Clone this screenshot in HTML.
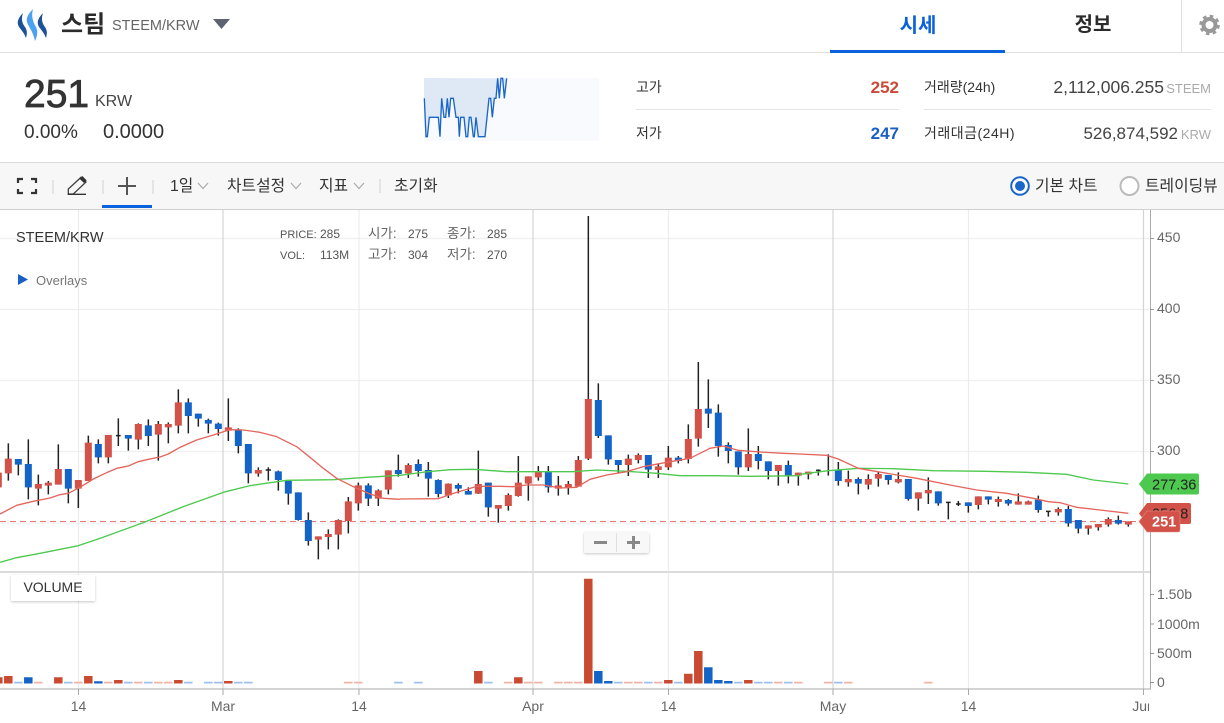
<!DOCTYPE html>
<html lang="ko"><head><meta charset="utf-8"><title>STEEM/KRW</title>
<style>
html,body{margin:0;padding:0;background:#fff;width:1224px;height:723px;overflow:hidden}
svg{display:block;fill:#333}
text{font-family:"Liberation Sans","Noto Sans CJK KR",sans-serif}
.ax{font-size:14px;fill:#666}
.in{font-size:12px;fill:#555}
.ko{font-size:13.5px;fill:#666}
.hg{fill:none;stroke-width:4;stroke-linejoin:round}
</style></head><body>
<svg width="1224" height="723" viewBox="0 0 1224 723" xmlns="http://www.w3.org/2000/svg">
<defs>
<clipPath id="cl"><rect x="0" y="690" width="1149" height="33"/></clipPath>
<filter id="sh" x="-10%" y="-20%" width="120%" height="150%"><feDropShadow dx="0" dy="1" stdDeviation="1.200" flood-color="#000" flood-opacity=".22"/></filter>
</defs>
<rect width="1224" height="723" fill="#fff"/>

<!-- header -->
<path d="M23 13C19 17 17 21 18 24.500C19 28.500 23.500 31 26 38C27.500 33 27 30 25 27C22 23 21 19 23 13Z" fill="#1d5299"/>
<path d="M33 9C28 14 26 18 27 22C28 26 33 31 35 41C37.500 36 38 31 36 27C33 22 31 16 33 9Z" fill="#4ba2f2"/>
<path d="M43 13C39 17 37 21 38 24.500C39 28.500 43.500 31 46 38C47.500 33 47 30 45 27C42 23 41 19 43 13Z" fill="#1d5299"/>
<text x="61" y="32.500" font-size="24" font-weight="700" fill="#2b2b2b">스팀</text>
<text x="112" y="30" font-size="14.500" fill="#666">STEEM/KRW</text>
<path d="M213 19H230L221.500 29Z" fill="#5f6370"/>
<text x="918" y="32" font-size="20" font-weight="700" text-anchor="middle" fill="#0a62dc">시세</text>
<text x="1093" y="31" font-size="20" font-weight="700" text-anchor="middle" fill="#2b2b2b">정보</text>
<rect x="1181" y="0" width="1" height="52" fill="#e2e2e2"/>
<circle cx="1209.500" cy="25" r="6" fill="none" stroke="#999" stroke-width="4"/>
<circle cx="1209.500" cy="25" r="8.800" fill="none" stroke="#999" stroke-width="3" stroke-dasharray="3.500 3.410"/>
<rect x="0" y="52" width="1224" height="1" fill="#e0e0e0"/>
<rect x="830" y="50" width="175" height="3" fill="#0a62dc"/>

<!-- price summary -->
<text x="24" y="107" font-size="39" fill="#333" stroke="#333" stroke-width=".8">251</text>
<text x="95" y="106" font-size="16" fill="#444">KRW</text>
<text x="24" y="138" font-size="19" fill="#333">0.00%</text>
<text x="103" y="138" font-size="20" fill="#333">0.0000</text>

<!-- sparkline -->
<rect x="424" y="78" width="175" height="63" fill="#f8fafd"/>
<g transform="translate(410 70) scale(.33333)">
<path d="M42 24V85L48 200H52L58 142H85L90 200L95 85L102 142H107L112 85L117 142L122 85H130L138 142H145L148 200L152 142H162L168 200H173L178 142H183L190 200H193L198 142L205 200H225L237 85H242L247 142L253 85H258L263 25L268 85L273 25H278L283 85L290 25Z" fill="#dfe9f5"/>
<path d="M43 85L48 200H52L58 142H85L90 200L95 85L102 142H107L112 85L117 142L122 85H130L138 142H145L148 200L152 142H162L168 200H173L178 142H183L190 200H193L198 142L205 200H225L237 85H242L247 142L253 85H258L263 25L268 85L273 25H278L283 85L290 25" fill="none" stroke="#1a66c8" stroke-width="4"/>
</g>

<!-- stats -->
<text x="636" y="92" font-size="14">고가</text>
<text x="899" y="93" font-size="17" font-weight="700" text-anchor="end" fill="#c84a37">252</text>
<rect x="636" y="109" width="263" height="1" fill="#e5e5e5"/>
<text x="636" y="138" font-size="14">저가</text>
<text x="899" y="139" font-size="17" font-weight="700" text-anchor="end" fill="#1a5fc4">247</text>
<text x="924" y="92" font-size="14">거래량(24h)</text>
<text x="1164" y="93" font-size="17.500" text-anchor="end" fill="#444">2,112,006.255</text>
<text x="1211" y="93" font-size="13" text-anchor="end" fill="#aaa">STEEM</text>
<rect x="924" y="109" width="287" height="1" fill="#e5e5e5"/>
<text x="924" y="138" font-size="14" letter-spacing=".5">거래대금(24H)</text>
<text x="1178" y="139" font-size="17" text-anchor="end" fill="#444">526,874,592</text>
<text x="1211" y="139" font-size="13" text-anchor="end" fill="#aaa">KRW</text>

<!-- toolbar -->
<rect x="0" y="162" width="1224" height="48" fill="#f7f7f7"/>
<rect x="0" y="162" width="1224" height="1" fill="#ddd"/>
<rect x="0" y="209" width="1224" height="1" fill="#d0d0d0"/>
<path d="M18 183V179H23M31 179H36V183M36 189V193H31M23 193H18V189" fill="none" stroke="#333" stroke-width="2.200"/>
<path d="M53 180V194M103 180V194M153 180V194M380 179V193" stroke="#ddd" stroke-width="1.500" fill="none"/>
<g transform="translate(0 165) scale(.33333)">
<path d="M205 72L243 37L258 51L220 87H205Z" fill="none" stroke="#444" stroke-width="4"/>
<path d="M238 41L247 33L260 46L252 54Z" fill="#333"/>
<path d="M203 88H258" stroke="#333" stroke-width="4"/>
</g>
<path d="M118 186H136M127 177V195" stroke="#555" stroke-width="2" fill="none"/>
<rect x="102" y="205" width="50" height="3" fill="#0a62dc"/>
<text x="170" y="191" font-size="15.800">1일</text>
<path d="M198 183L203 188.500L208 183M291 183L296 188.500L301 183M354 183L359 188.500L364 183" fill="none" stroke="#aaa" stroke-width="1.200"/>
<text x="227" y="191" font-size="15.800">차트설정</text>
<text x="319" y="191" font-size="15.800">지표</text>
<text x="394" y="191" font-size="15.800">초기화</text>
<circle cx="1020" cy="186" r="8.800" fill="#fff" stroke="#1a66c8" stroke-width="2"/>
<circle cx="1020" cy="186" r="5" fill="#1a66c8"/>
<text x="1035" y="191" font-size="15.800">기본 차트</text>
<circle cx="1129.500" cy="186" r="9" fill="#fff" stroke="#bbb" stroke-width="2"/>
<text x="1145" y="191" font-size="15.800">트레이딩뷰</text>

<!-- grid -->
<path d="M0 238.500H1150M0 309.500H1150M0 380.500H1150M0 451.500H1150M0 523H1150" stroke="#efefef" stroke-width="1.300" fill="none"/>
<path d="M78.500 210V689M359 210V689M668.500 210V689M968.500 210V689" stroke="#ececec" stroke-width="1.200" fill="none"/>
<path d="M223 210V689M533 210V689M833 210V689M1143.500 210V689" stroke="#d4d4d4" stroke-width="1.200" fill="none"/>
<rect x="1150" y="210" width="1" height="479" fill="#aaa"/>
<path d="M1150 238.500H1154M1150 309.500H1154M1150 380.500H1154M1150 451.500H1154M1150 594.500H1154M1150 624H1154M1150 653.500H1154M1150 682.500H1154" stroke="#999"/>
<path d="M0 521.500H1143" stroke="#e07a72" stroke-width="1" stroke-dasharray="6 4"/>

<!-- candles 0-400 -->
<g transform="translate(0 370) scale(.33333)" fill="none">
<path stroke="#222" stroke-width="4.500" d="M25 220V332M55 267V316M85 208V388M115 314V406M145 333V373M175 223V344M205 297V400M235 330V414M265 197V333M295 208V280M325 195V280M355 145V228M348 197H362M385 195V242M415 160V238M445 148V228M475 153V272M505 157V220M535 58V190M565 85V190M595 131V170M625 146V190M655 158V197M685 85V213M715 175V250M745 222V340M775 292V320M805 292V332M797 300H813M835 302V362M865 330V404M895 367V452M925 427V527M955 499V568M985 478V538M1015 448V538M1045 381V490M1075 338V422M1105 340V408M1135 358V408M1165 301V373M1195 254V320"/>
<path stroke="#d2524a" stroke-width="21" d="M-5 308V352M25 266V310M115 342V356M145 338V347M175 297V344M235 330V356M265 218V333M325 195V262M415 162V209M475 162V194M505 162V172M535 97V167M685 172V182M775 300V311M955 499V509M985 492V501M1015 450V494M1045 394V453M1075 346V400M1135 361V386M1165 301V359"/>
<path stroke="#1464c8" stroke-width="21" d="M55 267V284M85 282V352M205 297V356M295 222V262M385 195V206M445 166V198M565 97V138M595 131V146M625 150V161M655 161V177M715 178V228M745 222V310M835 304V330M865 332V371M895 367V450M925 450V513M1105 346V386M1195 300V312"/>
</g>
<!-- candles 400-800 -->
<g transform="translate(400 370) scale(.33333)" fill="none">
<path stroke="#222" stroke-width="4.500" d="M25 280V324M55 268V320M85 276V380M115 328V382M145 340V384M175 340V370M205 352V374M235 242V372M265 338V440M295 405V458M325 370V422M355 258V380M385 319V392M415 288V332M445 288V368M475 318V377M505 333V374M535 258V350M565 -462V270M595 40V204M625 196V284M655 270V308M685 254V318M715 250V280M745 255V324M775 280V324M805 228V300M835 258V280M865 163V280M895 -24V230M925 28V174M955 103V260M985 217V280M1015 244V314M1045 175V303M1075 228V298M1105 274V328M1135 285V347M1165 272V340M1195 308V347"/>
<path stroke="#d2524a" stroke-width="21" d="M25 285V310M145 341V376M235 342V371M295 405V416M325 375V408M355 338V378M385 319V341M415 306V322M475 346V356M505 342V354M535 270V350M565 87V266M685 266V285M715 255V270M775 289V300M805 263V292M865 207V267M895 117V206M1045 252V292M1135 285V303M1195 308V317"/>
<path stroke="#1464c8" stroke-width="21" d="M55 282V303M85 300V326M115 330V372M175 345V356M205 363V374M265 338V412M445 306V352M595 90V198M625 196V268M655 270V285M745 255V299M835 263V273M925 116V131M955 128V228M985 225V243M1015 244V292M1075 252V273M1105 274V303M1165 285V316"/>
</g>
<!-- candles 800+ -->
<g transform="translate(800 430) scale(.33333)" fill="none">
<path stroke="#222" stroke-width="4.500" d="M25 125V148M55 118V137M48 121H62M85 73V137M115 96V167M145 122V170M175 142V193M205 133V178M235 125V170M265 135V164M295 127V160M325 147V212M355 187V242M385 142V222M415 184V227M445 215V268M438 217H452M475 213V228M468 222H482M505 217V248M535 199V238M565 199V223M595 200V230M625 207V227M655 190V224M685 212V224M715 197V248M745 242V260M738 244H752M775 232V257M805 228V290M835 270V310M865 286V314M895 282V302M925 262V290M955 257V284M985 274V290"/>
<path stroke="#d2524a" stroke-width="21" d="M25 125V133M145 147V157M205 147V164M235 132V146M295 147V157M355 187V206M385 180V190M535 199V225M595 207V216M655 214V224M685 214V224M775 237V247M865 286V296M895 282V292M925 267V284M985 274V284"/>
<path stroke="#1464c8" stroke-width="21" d="M115 120V153M175 147V161M265 135V150M325 147V207M415 184V220M505 217V228M565 199V209M625 210V221M715 209V240M805 237V280M835 270V296M955 270V281"/>
</g>

<!-- moving averages -->
<g transform="translate(0 370) scale(.33333)">
<polyline class="hg" stroke="#4dc94d" points="0,577 50,563 130,548 235,527 300,505 430,458 550,410 670,367 750,347 860,331 1000,329 1100,322 1200,316"/>
<polyline class="hg" stroke="#e4655c" points="0,432 50,406 100,394 150,384 180,374 205,370 240,352 280,327 320,308 350,295 385,288 415,275 445,268 480,261 505,252 540,232 590,210 640,195 690,179 730,180 780,187 830,200 890,230 930,262 970,295 1010,325 1060,350 1110,372 1150,385 1200,388"/>
</g>
<g transform="translate(400 370) scale(.33333)">
<polyline class="hg" stroke="#4dc94d" points="0,316 75,306 150,299 220,298 320,305 520,305 590,300 680,304 770,310 840,317 950,317 1050,319 1200,317"/>
<polyline class="hg" stroke="#e4655c" points="0,387 115,386 160,370 230,349 300,349 340,350 380,345 430,345 480,354 530,352 570,328 620,315 680,305 730,290 800,277 870,265 930,235 970,228 1015,241 1080,246 1150,250 1200,252"/>
</g>
<g transform="translate(800 430) scale(.33333)">
<polyline class="hg" stroke="#4dc94d" points="0,133 85,122 175,115 280,116 400,122 560,124 680,127 800,133 880,150 985,162"/>
<polyline class="hg" stroke="#e4655c" points="0,72 80,76 115,87 175,115 250,128 350,145 450,165 530,180 620,190 700,205 745,215 780,218 830,232 900,240 985,250"/>
</g>

<!-- zoom buttons -->
<rect x="584" y="532" width="65" height="21" rx="2" fill="#f8f8f8" filter="url(#sh)"/>
<rect x="616" y="533" width="1" height="19" fill="#e0e0e0"/>
<path d="M594 542.500H607M627 542.500H640M633.500 536V549" stroke="#888" stroke-width="3" fill="none"/>

<!-- price labels -->
<text class="ax" x="1157" y="242">450</text>
<text class="ax" x="1157" y="313">400</text>
<text class="ax" x="1157" y="384">350</text>
<text class="ax" x="1157" y="455">300</text>

<path d="M1139 484L1147 473.500H1197A2 2 0 0 1 1199 475.500V492.500A2 2 0 0 1 1197 494.500H1147Z" fill="#4cc94e"/>
<text x="1152" y="489.500" font-size="14.500" fill="#222">277.36</text>
<path d="M1139 513.500L1147 503H1189A2 2 0 0 1 1191 505V522A2 2 0 0 1 1189 524H1147Z" fill="#d2524a"/>
<text x="1152" y="518.500" font-size="14.500" fill="#222">256.8</text>
<path d="M1139 521.500L1147 511H1178A2 2 0 0 1 1180 513V530A2 2 0 0 1 1178 532H1147Z" fill="#d2524a" stroke="#e48a83" stroke-width=".6"/>
<text x="1152" y="526.500" font-size="14.500" font-weight="700" fill="#fff">251</text>

<!-- chart legend -->
<text x="16" y="242" font-size="14.500" fill="#333">STEEM/KRW</text>
<path d="M18 274L28 279.500L18 285Z" fill="#1a5fc4"/>
<text x="36" y="285" font-size="13" fill="#777">Overlays</text>
<text class="in" style="font-size:11px" x="280" y="238">PRICE:</text><text class="in" x="320" y="238">285</text>
<text class="in" style="font-size:11px" x="280" y="259">VOL:</text><text class="in" x="320" y="259">113M</text>
<text class="ko" x="368" y="238">시가:</text><text class="in" x="408" y="238">275</text>
<text class="ko" x="447" y="238">종가:</text><text class="in" x="487" y="238">285</text>
<text class="ko" x="368" y="259">고가:</text><text class="in" x="408" y="259">304</text>
<text class="ko" x="447" y="259">저가:</text><text class="in" x="487" y="259">270</text>

<!-- volume panel -->
<rect x="0" y="571" width="1150" height="2" fill="#dcdcdc"/>
<g fill="none" stroke-width="8.500">
<path stroke="#f0b3a8" d="M38.300 681.700V683.500M78.300 681.700V683.500M108.300 681.700V683.500M138.300 681.700V683.500M158.300 681.700V683.500M168.300 681.700V683.500M348.300 681.700V683.500M358.300 681.700V683.500M508.300 681.700V683.500M528.300 681.700V683.500M538.300 681.700V683.500M558.300 681.700V683.500M568.300 681.700V683.500M578.300 681.700V683.500M628.300 681.700V683.500M638.300 681.700V683.500M658.300 681.700V683.500M778.300 681.700V683.500M798.300 681.700V683.500M828.300 681.700V683.500M848.300 681.700V683.500M928.300 681.700V683.500"/>
<path stroke="#9cc0f0" d="M18.300 681.700V683.500M68.300 681.700V683.500M128.300 681.700V683.500M148.300 681.700V683.500M188.300 681.700V683.500M208.300 681.700V683.500M218.300 681.700V683.500M238.300 681.700V683.500M248.300 681.700V683.500M398.300 681.700V683.500M418.300 681.700V683.500M488.300 681.700V683.500M618.300 681.700V683.500M648.300 681.700V683.500M678.300 681.700V683.500M738.300 681.700V683.500M758.300 681.700V683.500M768.300 681.700V683.500M788.300 681.700V683.500M838.300 681.700V683.500"/>
<path stroke="#c94a30" d="M-1.700 677.300V683.500M8.300 676V683.500M58.300 677.300V683.500M88.300 676V683.500M118.300 680V683.500M178.300 680V683.500M228.300 681V683.500M478.300 671V683.500M518.300 677.300V683.500M588.300 578.700V683.500M668.300 680V683.500M688.300 673.700V683.500M698.300 651V683.500M748.300 680V683.500"/>
<path stroke="#1464c8" d="M28.300 677.300V683.500M98.300 681.200V683.500M598.300 671V683.500M608.300 681V683.500M708.300 667.300V683.500M718.300 680V683.500M728.300 681V683.500"/>
</g>
<rect x="11" y="575" width="84" height="26" fill="#fff" filter="url(#sh)"/>
<text x="53" y="592" font-size="14" text-anchor="middle" fill="#333">VOLUME</text>
<text class="ax" x="1157" y="599">1.50b</text>
<text class="ax" x="1157" y="629">1000m</text>
<text class="ax" x="1157" y="658">500m</text>
<text class="ax" x="1157" y="687">0</text>

<!-- time axis -->
<rect x="0" y="688.500" width="1151" height="1" fill="#aaa"/>
<path d="M78.500 689V695M223 689V695M359 689V695M533 689V695M668.500 689V695M833 689V695M968.500 689V695M1143.500 689V695" stroke="#aaa"/>
<g text-anchor="middle" clip-path="url(#cl)">
<text class="ax" x="78.500" y="711">14</text>
<text class="ax" x="223" y="711">Mar</text>
<text class="ax" x="359" y="711">14</text>
<text class="ax" x="533" y="711">Apr</text>
<text class="ax" x="668.500" y="711">14</text>
<text class="ax" x="833" y="711">May</text>
<text class="ax" x="968.500" y="711">14</text>
<text class="ax" x="1143.500" y="711">Jun</text>
</g>
</svg>
</body></html>
